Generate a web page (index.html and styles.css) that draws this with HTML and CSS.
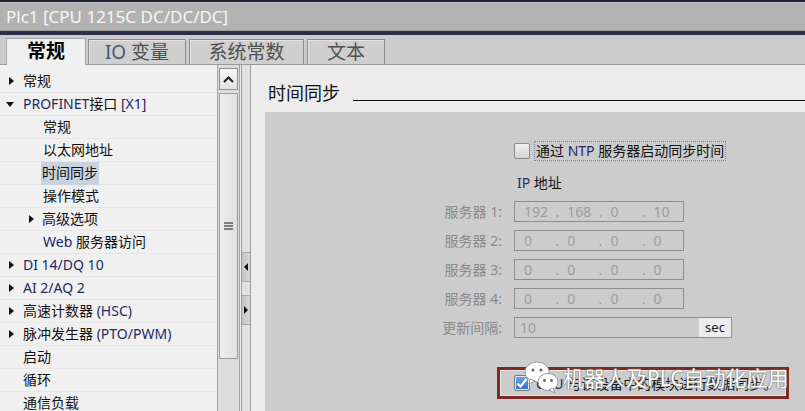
FILE: index.html
```html
<!DOCTYPE html>
<html lang="zh">
<head>
    <meta charset="UTF-8">
    <title>Plc1 属性</title>
    <link rel="stylesheet" href="styles.css">
</head>
<body>
    <div class="window">
        <div class="titlebar">Plc1 [CPU 1215C DC/DC/DC]</div>

        <div class="tabbar">
            <div class="tab tab-general active">常规</div>
            <div class="tab tab-io"><span class="latin">IO</span> 变量</div>
            <div class="tab tab-const">系统常数</div>
            <div class="tab tab-text">文本</div>
        </div>

        <div class="main">
            <div class="tree">
                <div class="row lv0"><span class="arrow right"></span>常规</div>
                <div class="row lv0"><span class="arrow down"></span><span class="latin">PROFINET</span>接口 <span class="latin">[X1]</span></div>
                <div class="row lv1">常规</div>
                <div class="row lv1">以太网地址</div>
                <div class="row lv1"><span class="selected">时间同步</span></div>
                <div class="row lv1">操作模式</div>
                <div class="row lv1 has-arrow"><span class="arrow right"></span>高级选项</div>
                <div class="row lv1"><span class="latin">Web</span> 服务器访问</div>
                <div class="row lv0"><span class="arrow right"></span><span class="latin">DI 14/DQ 10</span></div>
                <div class="row lv0"><span class="arrow right"></span><span class="latin">AI 2/AQ 2</span></div>
                <div class="row lv0"><span class="arrow right"></span>高速计数器 <span class="latin">(HSC)</span></div>
                <div class="row lv0"><span class="arrow right"></span>脉冲发生器 <span class="latin">(PTO/PWM)</span></div>
                <div class="row lv0 plain">启动</div>
                <div class="row lv0 plain">循环</div>
                <div class="row lv0 plain">通信负载</div>
            </div>

            <div class="vscroll">
                <div class="scroll-btn">
                    <svg width="11" height="7" viewBox="0 0 11 7"><path d="M1 6 L5.5 1.5 L10 6" fill="none" stroke="#222" stroke-width="2"/></svg>
                </div>
                <div class="thumb">
                    <div class="grip"></div>
                </div>
            </div>

            <div class="splitter">
                <div class="split-btn first"><span class="tri-left"></span></div>
                <div class="split-btn"><span class="tri-right"></span></div>
            </div>

            <div class="content">
                <div class="section-head">
                    <span class="section-title">时间同步</span>
                    <div class="rule"></div>
                </div>

                <div class="panel">
                    <div class="ntp-row">
                        <span class="checkbox"></span>
                        <span class="focus-label">通过 <span class="latin">NTP</span> 服务器启动同步时间</span>
                    </div>

                    <div class="ip-title"><span class="latin">IP</span> 地址</div>

                    <div class="form-grid">
                        <div class="label">服务器 1:</div>
                        <div class="field ip"><span class="oct">192</span><span class="dot">.</span><span class="oct">168</span><span class="dot">.</span><span class="oct">0</span><span class="dot">.</span><span class="oct">10</span></div>

                        <div class="label">服务器 2:</div>
                        <div class="field ip"><span class="oct">0</span><span class="dot">.</span><span class="oct">0</span><span class="dot">.</span><span class="oct">0</span><span class="dot">.</span><span class="oct">0</span></div>

                        <div class="label">服务器 3:</div>
                        <div class="field ip"><span class="oct">0</span><span class="dot">.</span><span class="oct">0</span><span class="dot">.</span><span class="oct">0</span><span class="dot">.</span><span class="oct">0</span></div>

                        <div class="label">服务器 4:</div>
                        <div class="field ip"><span class="oct">0</span><span class="dot">.</span><span class="oct">0</span><span class="dot">.</span><span class="oct">0</span><span class="dot">.</span><span class="oct">0</span></div>

                        <div class="label">更新间隔:</div>
                        <div class="field interval"><span class="value">10</span><span class="unit">sec</span></div>
                    </div>

                    <div class="sync-box">
                        <span class="checkbox checked">
                            <svg width="12" height="12" viewBox="0 0 12 12"><path d="M1.5 6.5 L4.5 9.5 L10.5 2" fill="none" stroke="#fff" stroke-width="2.2"/></svg>
                        </span>
                        <span class="sync-label"><span class="latin">CPU</span> 与该设备中的模块进行数据同步。</span>
                    </div>

                    <div class="watermark">
                        <svg class="wx-icon" width="36" height="34" viewBox="0 0 36 34">
                            <ellipse cx="13" cy="12" rx="12" ry="10" fill="#fff" stroke="#9a9a9a" stroke-width="1"/>
                            <path d="M6 19 L5 24 L11 21 Z" fill="#fff" stroke="#9a9a9a" stroke-width="1"/>
                            <circle cx="9" cy="10" r="1.6" fill="#666"/>
                            <circle cx="17" cy="10" r="1.6" fill="#666"/>
                            <ellipse cx="24" cy="22" rx="10" ry="8.5" fill="#fff" stroke="#9a9a9a" stroke-width="1"/>
                            <path d="M29 28 L31 33 L25 30 Z" fill="#fff" stroke="#9a9a9a" stroke-width="1"/>
                            <circle cx="20.5" cy="20.5" r="1.4" fill="#666"/>
                            <circle cx="27.5" cy="20.5" r="1.4" fill="#666"/>
                        </svg>
                        <span class="wx-text">机器人及PLC自动化应用</span>
                    </div>
                </div>
            </div>
        </div>
    </div>
</body>
</html>
```

FILE: styles.css
```css
body {
    margin: 0;
    padding: 0;
    font-family: "Noto Sans", "Noto Sans CJK SC", sans-serif;
    font-size: 14px;
    color: #111;
    background-color: #f0f0f0;
    overflow: hidden;
}

.window {
    width: 805px;
    height: 411px;
    display: flex;
    flex-direction: column;
    overflow: hidden;
}

/* title bar */
.titlebar {
    height: 29px;
    border-top: 2px solid #1e2231;
    border-bottom: 4px solid #2b3048;
    box-shadow: inset 0 1px 0 #c4c4c4, inset 0 -1px 0 #9c9c9c;
    background-color: #b2b2b2;
    color: #f6f6f6;
    font-size: 17px;
    line-height: 30px;
    padding-left: 6px;
    flex-shrink: 0;
}

/* tabs */
.tabbar {
    height: 29px;
    background-color: #cccccc;
    border-bottom: 1px solid #9a9a9a;
    display: flex;
    align-items: flex-end;
    padding-left: 6px;
    flex-shrink: 0;
}

.tab {
    height: 24px;
    margin-right: 3px;
    border: 1px solid #8e8e8e;
    border-bottom: none;
    box-shadow: inset 1px 1px 0 #e4e4e4;
    background-color: #cfcfcf;
    color: #505050;
    font-size: 19px;
    line-height: 24px;
    text-align: center;
}

.tab.active {
    height: 26px;
    margin-bottom: -1px;
    background-color: #f0f0f0;
    color: #000;
    font-weight: bold;
    box-shadow: none;
    border-color: #a8a8a8;
}

.tab-general { width: 78px; margin-right: 2px; }
.tab-io { width: 96px; }
.tab-const { width: 113px; }
.tab-text { width: 76px; }

.tab-io .latin {
    color: #4a5670;
}

/* main area */
.main {
    flex: 1;
    display: flex;
    min-height: 0;
}

.tree {
    width: 217px;
    padding-top: 5px;
    background-color: #f0f0f0;
    flex-shrink: 0;
}

.row {
    height: 22px;
    line-height: 22px;
    border-bottom: 1px solid #e6e6e6;
    white-space: nowrap;
    position: relative;
}

.row.lv0 { padding-left: 23px; }
.row.lv1 { padding-left: 43px; }
.row.lv1.has-arrow { padding-left: 42px; }

.latin {
    color: #202a62;
}

.arrow {
    position: absolute;
    width: 0;
    height: 0;
}

.arrow.right {
    left: 9px;
    top: 7px;
    border-left: 5px solid #111;
    border-top: 4px solid transparent;
    border-bottom: 4px solid transparent;
}

.has-arrow .arrow.right {
    left: 29px;
}

.arrow.down {
    left: 6px;
    top: 9px;
    border-top: 5px solid #111;
    border-left: 4px solid transparent;
    border-right: 4px solid transparent;
}

.selected {
    display: inline-block;
    height: 23px;
    background-color: #c9d3de;
    padding: 0 1px;
    margin-left: -2px;
}

/* scrollbar */
.vscroll {
    width: 21px;
    border-left: 1px solid #a2a2a2;
    border-right: 1px solid #a2a2a2;
    background-color: #dcdcdc;
    display: flex;
    flex-direction: column;
    align-items: center;
    padding-top: 3px;
    flex-shrink: 0;
}

.scroll-btn {
    width: 17px;
    height: 20px;
    border: 1px solid #8f8f8f;
    background: linear-gradient(#f6f6f6, #e2e2e2);
    display: flex;
    justify-content: center;
    align-items: center;
}

.thumb {
    width: 17px;
    height: 264px;
    margin-top: 3px;
    border: 1px solid #9d9d9d;
    background: linear-gradient(90deg, #eeeeee, #e0e0e0);
    display: flex;
    justify-content: center;
    align-items: center;
}

.grip {
    width: 9px;
    height: 2px;
    background-color: #7d7d7d;
    box-shadow: 0 3px 0 #7d7d7d, 0 -3px 0 #7d7d7d;
}

/* splitter */
.splitter {
    width: 8px;
    margin-left: 1px;
    border-left: 1px solid #9a9a9a;
    border-right: 1px solid #9a9a9a;
    background-color: #e2e2e2;
    display: flex;
    flex-direction: column;
    flex-shrink: 0;
}

.split-btn {
    height: 28px;
    margin-top: 13px;
    background: linear-gradient(90deg, #c4c4c4, #d8d8d8);
    border-top: 1px solid #aaa;
    border-bottom: 1px solid #aaa;
    display: flex;
    align-items: center;
    justify-content: center;
}

.split-btn.first {
    margin-top: 187px;
}

.tri-left {
    border-right: 4px solid #111;
    border-top: 4px solid transparent;
    border-bottom: 4px solid transparent;
}

.tri-right {
    border-left: 4px solid #111;
    border-top: 4px solid transparent;
    border-bottom: 4px solid transparent;
}

/* right content */
.content {
    flex: 1;
    background-color: #ececec;
    display: flex;
    flex-direction: column;
    min-width: 0;
}

.section-head {
    height: 47px;
    display: flex;
    align-items: flex-start;
    padding-left: 17px;
    padding-top: 16px;
    box-sizing: border-box;
}

.section-title {
    font-size: 18px;
    line-height: 24px;
    color: #111;
}

.rule {
    flex: 1;
    height: 1px;
    margin-top: 19px;
    margin-left: 13px;
    background-color: #111;
}

.panel {
    flex: 1;
    margin-left: 14px;
    background-color: #cccccc;
    padding-top: 31px;
    position: relative;
}

.checkbox {
    width: 14px;
    height: 14px;
    border: 1px solid #8a8a8a;
    border-radius: 2px;
    background: linear-gradient(#f2f2f2, #d4d4d4);
    display: inline-flex;
    justify-content: center;
    align-items: center;
    flex-shrink: 0;
}

.checkbox.checked {
    border-color: #7a7a7a;
    background: linear-gradient(#6aa6ea, #2f6fc4);
    box-shadow: inset 0 0 0 1px #dfe8f4;
}

.ntp-row {
    display: flex;
    align-items: center;
    height: 16px;
    margin-left: 249px;
}

.focus-label {
    margin-left: 5px;
    padding: 0 1px;
    line-height: 18px;
    outline: 1px dotted #7a86a8;
    color: #111;
}

.ip-title {
    margin-left: 252px;
    margin-top: 14px;
    line-height: 20px;
}

.ip-title .latin {
    color: #2a2a70;
}

.form-grid {
    display: grid;
    grid-template-columns: 237px auto;
    grid-auto-rows: 21px;
    column-gap: 12px;
    row-gap: 8px;
    margin-top: 8px;
}

.label {
    text-align: right;
    color: #8a8a8a;
    line-height: 21px;
}

.field {
    height: 19px;
    border: 1px solid #8e8e8e;
    color: #9c9c9c;
    line-height: 19px;
    display: flex;
}

.field.ip {
    width: 159px;
    padding-left: 9px;
}

.oct {
    width: 30px;
}

.dot {
    width: 14px;
    padding-left: 2px;
    box-sizing: border-box;
}

.field.interval {
    width: 216px;
    justify-content: space-between;
}

.interval .value {
    padding-left: 5px;
}

.interval .unit {
    width: 32px;
    background-color: #ececec;
    color: #222;
    font-size: 13px;
    text-align: center;
}

.sync-box {
    box-sizing: border-box;
    margin-left: 232px;
    margin-top: 29px;
    width: 292px;
    height: 32px;
    border: 3px solid #7c2b22;
    box-shadow: inset 0 0 0 1px #e6e6e6;
    display: flex;
    align-items: center;
    padding-left: 14px;
}

.sync-label {
    margin-left: 6px;
    color: #111;
    white-space: nowrap;
}

/* account watermark laid over the screenshot */
.watermark {
    position: absolute;
    left: 259px;
    top: 248px;
    display: flex;
    align-items: center;
    pointer-events: none;
}

.wx-text {
    margin-left: 3px;
    font-size: 21px;
    color: #ffffff;
    text-shadow: 0 0 1px #777, 0 0 1px #777, 0 0 2px #888;
}
```
